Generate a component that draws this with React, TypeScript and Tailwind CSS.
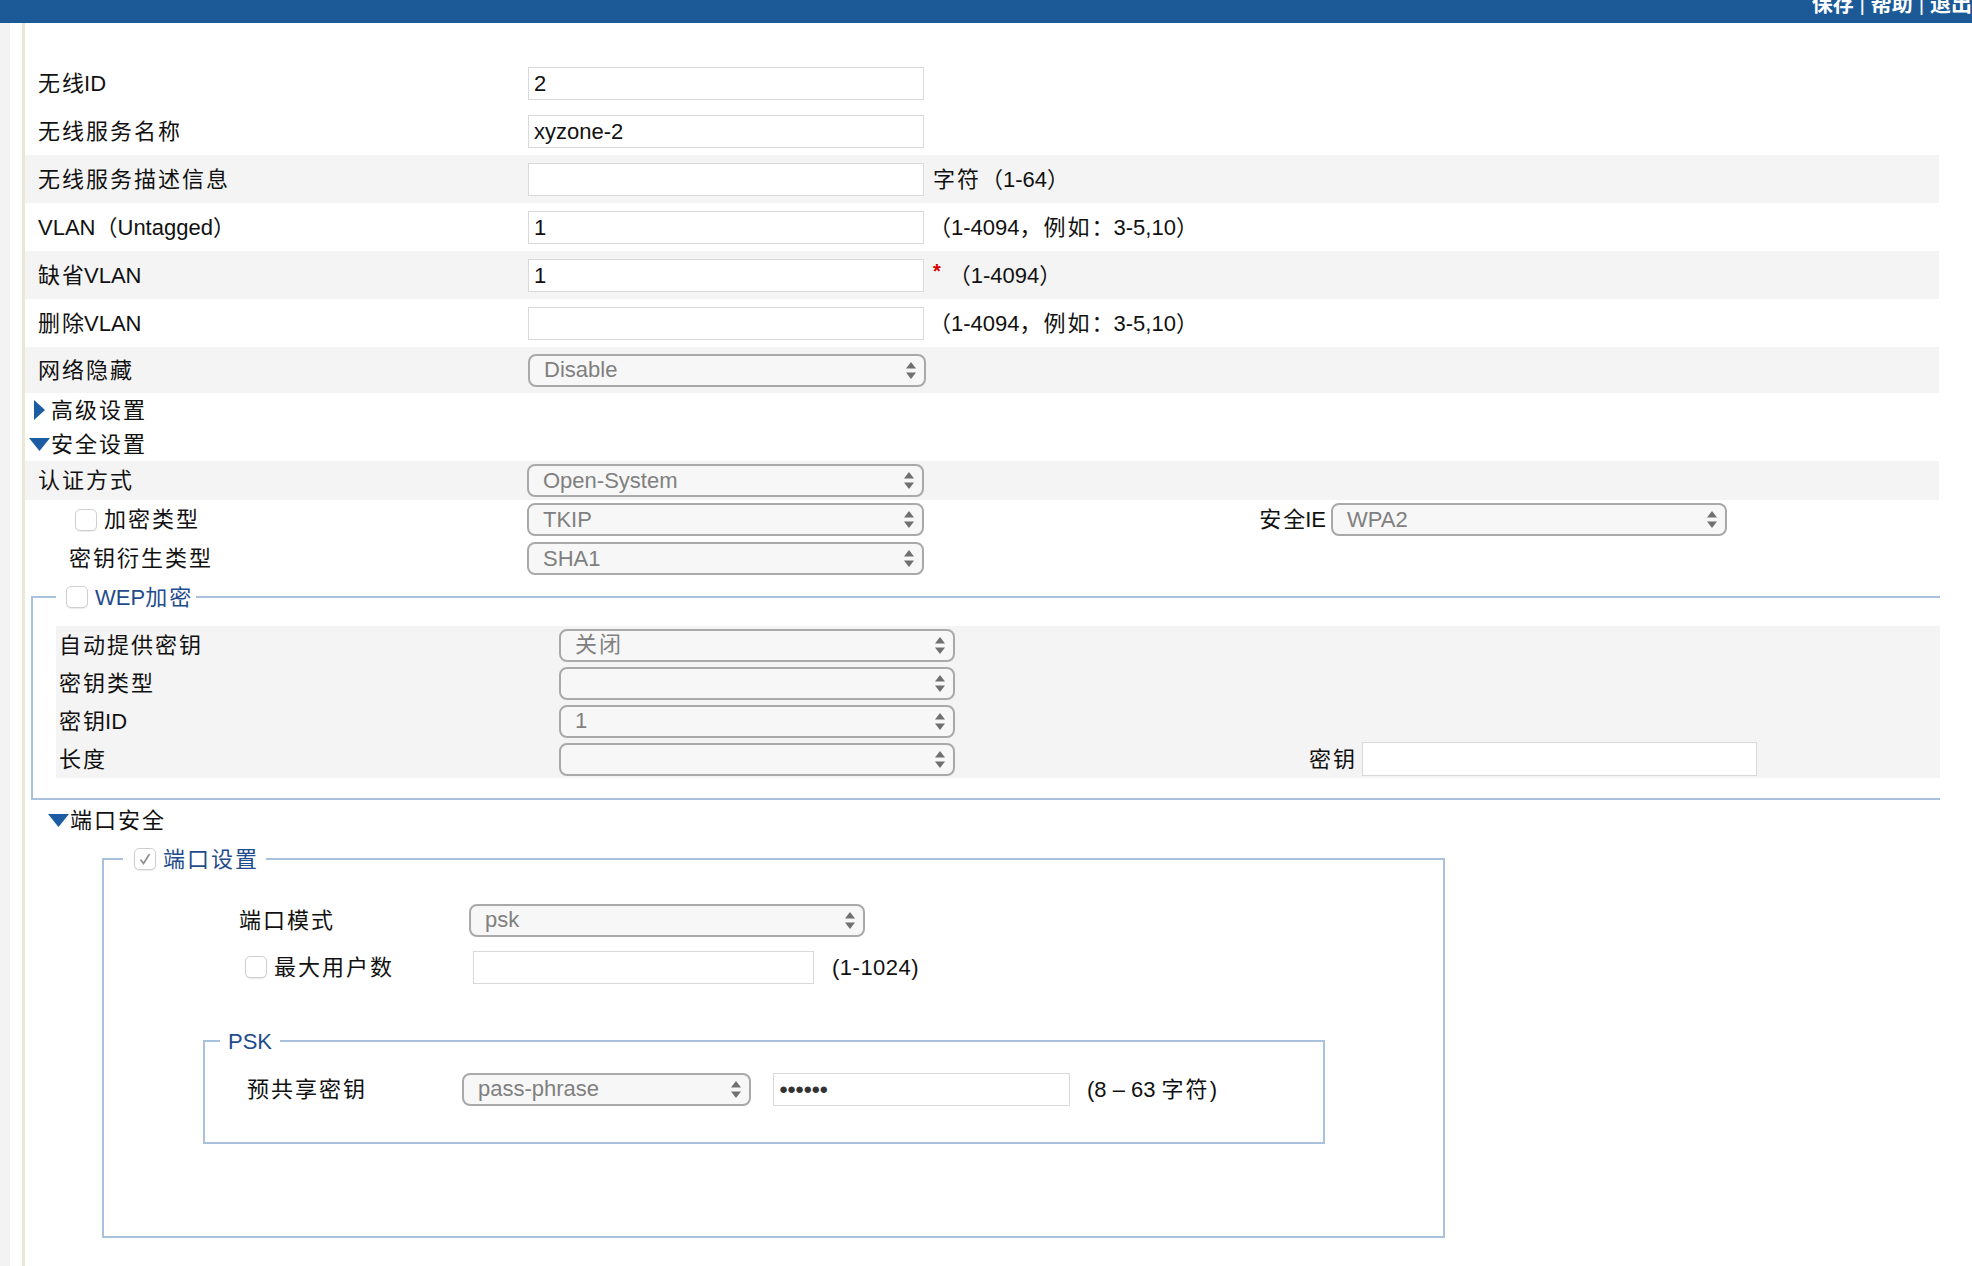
import React from "react";

const CJK = /[\u3000-\u9fff\uff00-\uffef]/;

function T({ s }: { s: string }) {
  const runs: { t: string; c: boolean }[] = [];
  for (const ch of s) {
    const c = CJK.test(ch);
    const last = runs[runs.length - 1];
    if (last && last.c === c) last.t += ch;
    else runs.push({ t: ch, c });
  }
  return (
    <>
      {runs.map((r, i) =>
        r.c ? (
          <span key={i} className={i < runs.length - 1 ? "mr-[-2px] tracking-[2px]" : "tracking-[2px]"}>
            {r.t}
          </span>
        ) : (
          <span key={i}>{r.t}</span>
        )
      )}
    </>
  );
}

function Arrows() {
  return (
    <svg width="10" height="17" viewBox="0 0 10 17" className="shrink-0">
      <polygon points="5,0 10,6.5 0,6.5" fill="#707070" />
      <polygon points="0,10.5 10,10.5 5,17" fill="#707070" />
    </svg>
  );
}

function Sel({ value, cls }: { value: string; cls: string }) {
  return (
    <div
      className={`flex items-center justify-between rounded-[8px] border-2 border-[#a9a9a9] bg-[#f7f7f7] pl-[14px] pr-[8px] text-[#808080] ${cls}`}
    >
      <span className="leading-none">
        <T s={value} />
      </span>
      <Arrows />
    </div>
  );
}

function Inp({ value, cls }: { value?: string; cls: string }) {
  return (
    <div className={`flex items-center border border-[#d9d9d9] bg-white pl-[5px] text-[#111] ${cls}`}>
      {value}
    </div>
  );
}

function Check({ checked }: { checked?: boolean }) {
  return (
    <div className="flex h-[22px] w-[22px] shrink-0 items-center justify-center rounded-[5px] border border-[#cfcfcf] bg-white shadow-[0_1px_1px_rgba(0,0,0,0.08)]">
      {checked ? (
        <svg width="14" height="14" viewBox="0 0 14 14">
          <polyline points="2.5,7.5 5.5,11.5 11.5,2" fill="none" stroke="#8c8c8c" strokeWidth="1.6" />
        </svg>
      ) : null}
    </div>
  );
}

function TriRight() {
  return (
    <svg width="11" height="20" viewBox="0 0 11 20" className="shrink-0">
      <polygon points="0,0 11,10 0,20" fill="#1b5ca3" />
    </svg>
  );
}

function TriDown() {
  return (
    <svg width="21" height="13" viewBox="0 0 21 13" className="shrink-0">
      <polygon points="0,0 21,0 10.5,13" fill="#1b5ca3" />
    </svg>
  );
}

function Row({
  label,
  gray,
  h,
  children,
}: {
  label: string;
  gray?: boolean;
  h: string;
  children?: React.ReactNode;
}) {
  return (
    <div className={`flex items-center ${h} ${gray ? "bg-[#f4f4f4]" : ""}`}>
      <div className="w-[503px] shrink-0 pl-[13px]">
        <T s={label} />
      </div>
      {children}
    </div>
  );
}

export default function App() {
  return (
    <div className="flex h-[1266px] w-[1972px] flex-col overflow-hidden bg-white font-['Liberation_Sans','Noto_Sans_CJK_SC',sans-serif] text-[22px] text-[#111]">
      <div className="flex h-[23px] shrink-0 items-start justify-end overflow-hidden bg-[#1b5a97]">
        <div className="-mt-[8px] whitespace-nowrap text-[21px] font-bold leading-[24px] text-white">
          保存 <span className="font-normal">|</span> 帮助 <span className="font-normal">|</span> 退出
        </div>
      </div>
      <div className="flex flex-1">
        <div className="w-[10px] shrink-0 bg-[#f3f3f3]" />
        <div className="w-[12px] shrink-0" />
        <div className="w-[3px] shrink-0 bg-[#ece8d7]" />
        <div className="flex w-[1914px] flex-col pt-[36px]">
          <Row label="无线ID" h="h-[48px]">
            <Inp value="2" cls="h-[33px] w-[396px]" />
          </Row>
          <Row label="无线服务名称" h="h-[48px]">
            <Inp value="xyzone-2" cls="h-[33px] w-[396px]" />
          </Row>
          <Row label="无线服务描述信息" h="h-[48px]" gray>
            <Inp cls="h-[33px] w-[396px]" />
            <span className="ml-[9px]">
              <T s="字符（1-64）" />
            </span>
          </Row>
          <Row label="VLAN（Untagged）" h="h-[48px]">
            <Inp value="1" cls="h-[33px] w-[396px]" />
            <span className="ml-[5px]">
              <T s="（1-4094，例如：3-5,10）" />
            </span>
          </Row>
          <Row label="缺省VLAN" h="h-[48px]" gray>
            <Inp value="1" cls="h-[33px] w-[396px]" />
            <span className="ml-[9px] -mt-[8px] text-[20px] font-bold text-[#d40000]">*</span>
            <span className="ml-[8px]">
              <T s="（1-4094）" />
            </span>
          </Row>
          <Row label="删除VLAN" h="h-[48px]">
            <Inp cls="h-[33px] w-[396px]" />
            <span className="ml-[5px]">
              <T s="（1-4094，例如：3-5,10）" />
            </span>
          </Row>
          <Row label="网络隐藏" h="h-[46px]" gray>
            <Sel value="Disable" cls="h-[33px] w-[398px]" />
          </Row>

          <div className="flex h-[34px] items-center pl-[9px]">
            <TriRight />
            <span className="ml-[6px]">
              <T s="高级设置" />
            </span>
          </div>
          <div className="flex h-[34px] items-center pl-[4px]">
            <TriDown />
            <span className="ml-[1px]">
              <T s="安全设置" />
            </span>
          </div>

          <div className="flex h-[39px] items-center bg-[#f4f4f4]">
            <div className="w-[502px] shrink-0 pl-[13px]">
              <T s="认证方式" />
            </div>
            <Sel value="Open-System" cls="h-[33px] w-[397px]" />
          </div>
          <div className="flex h-[39px] items-center">
            <div className="flex w-[502px] shrink-0 items-center gap-[7px] pl-[50px]">
              <Check />
              <T s="加密类型" />
            </div>
            <Sel value="TKIP" cls="h-[33px] w-[397px]" />
            <div className="ml-auto mr-[212px] flex items-center gap-[5px]">
              <span>
                <T s="安全IE" />
              </span>
              <Sel value="WPA2" cls="h-[33px] w-[396px]" />
            </div>
          </div>
          <div className="flex h-[39px] items-center">
            <div className="w-[502px] shrink-0 pl-[44px]">
              <T s="密钥衍生类型" />
            </div>
            <Sel value="SHA1" cls="h-[33px] w-[397px]" />
          </div>

          <fieldset className="ml-[6px] mt-[6px] w-[1909px] border-2 border-r-0 border-[#a8c1dc] pb-[20px] pl-[23px]">
            <legend className="h-[26px] pl-[10px] pr-[3px]">
              <div className="flex h-[26px] items-center gap-[7px] text-[#1f4c8c]">
                <Check />
                <span>
                  <T s="WEP加密" />
                </span>
              </div>
            </legend>
            <div className="mt-[16px] flex flex-col bg-[#f4f4f4]">
              <div className="flex h-[38px] items-center">
                <div className="w-[503px] shrink-0 pl-[3px]">
                  <T s="自动提供密钥" />
                </div>
                <Sel value="关闭" cls="h-[33px] w-[396px]" />
              </div>
              <div className="flex h-[38px] items-center">
                <div className="w-[503px] shrink-0 pl-[3px]">
                  <T s="密钥类型" />
                </div>
                <Sel value="" cls="h-[33px] w-[396px]" />
              </div>
              <div className="flex h-[38px] items-center">
                <div className="w-[503px] shrink-0 pl-[3px]">
                  <T s="密钥ID" />
                </div>
                <Sel value="1" cls="h-[33px] w-[396px]" />
              </div>
              <div className="flex h-[38px] items-center">
                <div className="w-[503px] shrink-0 pl-[3px]">
                  <T s="长度" />
                </div>
                <Sel value="" cls="h-[33px] w-[396px]" />
                <div className="ml-auto mr-[183px] flex items-center gap-[5px]">
                  <T s="密钥" />
                  <Inp cls="h-[34px] w-[395px]" />
                </div>
              </div>
            </div>
          </fieldset>

          <div className="mt-[3px] flex h-[34px] items-center pl-[23px]">
            <TriDown />
            <span className="ml-[1px]">
              <T s="端口安全" />
            </span>
          </div>

          <fieldset className="ml-[77px] mt-[9px] w-[1343px] border-2 border-[#a8c1dc] pb-[92px] pl-[19px]">
            <legend className="h-[26px] pl-[11px] pr-[7px]">
              <div className="flex h-[26px] items-center gap-[7px] text-[#1f4c8c]">
                <Check checked />
                <T s="端口设置" />
              </div>
            </legend>
            <div className="mt-[28px] flex h-[40px] items-center pl-[116px]">
              <div className="w-[230px] shrink-0">
                <T s="端口模式" />
              </div>
              <Sel value="psk" cls="h-[33px] w-[396px]" />
            </div>
            <div className="mt-[8px] flex h-[38px] items-center pl-[116px]">
              <div className="flex w-[234px] shrink-0 items-center gap-[7px] pl-[6px]">
                <Check />
                <T s="最大用户数" />
              </div>
              <Inp cls="h-[33px] w-[341px]" />
              <span className="ml-[18px] tracking-[0.5px]">(1-1024)</span>
            </div>

            <fieldset className="ml-[80px] mt-[42px] w-[1122px] border-2 border-[#a8c1dc] pb-[35px] pl-[15px]">
              <legend className="h-[26px] px-[8px]">
                <div className="flex h-[26px] items-center text-[#1f4c8c]">PSK</div>
              </legend>
              <div className="mt-[17px] flex h-[36px] items-center pl-[27px]">
                <div className="w-[215px] shrink-0">
                  <T s="预共享密钥" />
                </div>
                <Sel value="pass-phrase" cls="h-[33px] w-[289px]" />
                <div className="ml-[22px] flex h-[33px] w-[297px] items-center border border-[#d9d9d9] bg-white pl-[5px] text-[15px] tracking-[-1px] text-[#333]">
                  ●●●●●●
                </div>
                <span className="ml-[17px]">
                  (8 – 63 <T s="字符" />)
                </span>
              </div>
            </fieldset>
          </fieldset>
        </div>
      </div>
    </div>
  );
}
